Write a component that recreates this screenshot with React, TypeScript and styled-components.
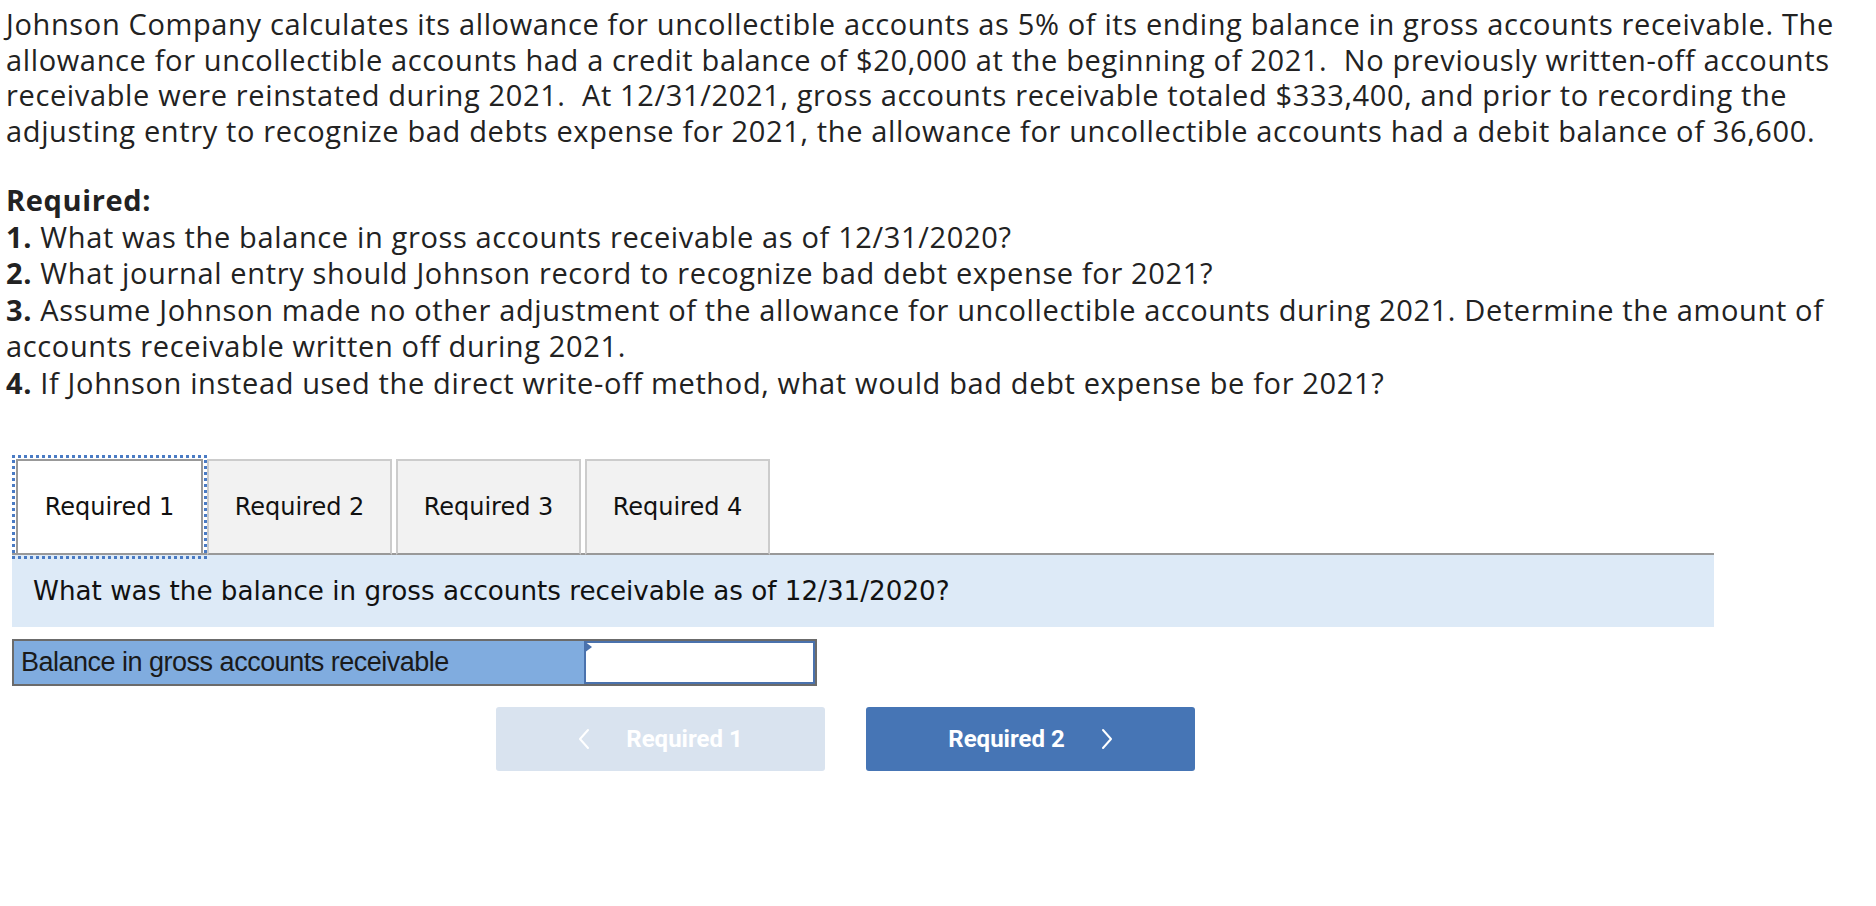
import styled, { createGlobalStyle } from "styled-components";

const GlobalStyle = createGlobalStyle`
  html, body {
    margin: 0;
    padding: 0;
    background: #ffffff;
  }
`;

const Page = styled.div`
  width: 1876px;
  min-height: 906px;
  box-sizing: border-box;
`;

const Prose = styled.div`
  font-family: "Open Sans", Lato, sans-serif;
  font-size: 29px;
  letter-spacing: 0.64px;
  color: #222222;
  padding-left: 6px;
  white-space: nowrap;

  b {
    font-weight: 700;
  }
`;

const Intro = styled.p`
  margin: 0;
  padding-top: 6px;
  line-height: 35.5px;
`;

const Required = styled.div`
  margin-top: 34px;
  line-height: 36.5px;
`;

const Work = styled.div`
  margin: 0 0 0 12px;
  width: 1702px;
  padding-top: 58px;
`;

const TabStrip = styled.div`
  display: flex;
  align-items: flex-end;
  gap: 4px;
  border-bottom: 2px solid #999999;
  padding-left: 4px;
`;

const Tab = styled.button<{ $active?: boolean }>`
  box-sizing: border-box;
  width: ${(p) => (p.$active ? "187px" : "185px")};
  height: 96px;
  margin-bottom: -2px;
  border: 2px solid ${(p) => (p.$active ? "#999999" : "#cccccc")};
  border-bottom: 2px solid #999999;
  background: ${(p) => (p.$active ? "#ffffff" : "#f2f2f2")};
  font-family: "DejaVu Sans", Verdana, sans-serif;
  font-size: 24px;
  color: #111111;
  padding: 0;
  cursor: pointer;
  outline: ${(p) => (p.$active ? "3px dotted #4a7bc4" : "none")};
  outline-offset: 1px;
`;

const Question = styled.div`
  background: #ddeaf7;
  height: 72px;
  display: flex;
  align-items: center;
  padding-left: 21px;
  font-family: "DejaVu Sans", Verdana, sans-serif;
  font-size: 26.2px;
  color: #111111;
`;

const AnswerRow = styled.div`
  display: flex;
  margin-top: 12px;
  height: 47px;
`;

const Label = styled.div`
  box-sizing: border-box;
  width: 572px;
  background: #80acdf;
  border: 2px solid #6b6b6b;
  border-right: none;
  display: flex;
  align-items: center;
  padding-left: 7px;
  font-family: "Liberation Sans", Arial, sans-serif;
  font-size: 27px;
  letter-spacing: -0.5px;
  color: #1a1a1a;
`;

const InputCell = styled.div`
  position: relative;
  box-sizing: border-box;
  width: 233px;
  border: 2px solid #6b6b6b;
  border-left: none;
  background: #ffffff;
`;

const Input = styled.input`
  box-sizing: border-box;
  width: 100%;
  height: 100%;
  border: 2px solid #4a72ad;
  outline: none;
  font-size: 20px;
  padding: 0 8px;
`;

const Marker = styled.span`
  position: absolute;
  left: 0;
  top: 0;
  width: 0;
  height: 0;
  border-top: 6px solid transparent;
  border-bottom: 6px solid transparent;
  border-left: 8px solid #4a72ad;
`;

const Nav = styled.div`
  display: flex;
  gap: 41px;
  margin-top: 21px;
  padding-left: 484px;
`;

const NavButton = styled.button<{ $disabled?: boolean }>`
  box-sizing: border-box;
  width: 329px;
  height: 64px;
  border: none;
  border-radius: 3px;
  background: ${(p) => (p.$disabled ? "#d9e3ef" : "#4675b5")};
  color: #ffffff;
  font-family: Roboto, "Liberation Sans", sans-serif;
  font-weight: 700;
  font-size: 24px;
  display: flex;
  align-items: center;
  justify-content: center;
  gap: 36px;
  cursor: ${(p) => (p.$disabled ? "default" : "pointer")};
`;

const Chevron = ({ dir }: { dir: "left" | "right" }) => (
  <svg width="12" height="22" viewBox="0 0 12 22" fill="none">
    <path
      d={dir === "left" ? "M10 2 L2 11 L10 20" : "M2 2 L10 11 L2 20"}
      stroke="#ffffff"
      strokeWidth="2"
      strokeLinecap="round"
      strokeLinejoin="round"
    />
  </svg>
);

export default function App() {
  return (
    <Page>
      <GlobalStyle />
      <Prose>
        <Intro>
          Johnson Company calculates its allowance for uncollectible accounts as 5% of its ending balance in gross accounts receivable. The
          <br />
          allowance for uncollectible accounts had a credit balance of $20,000 at the beginning of 2021.&nbsp; No previously written-off accounts
          <br />
          receivable were reinstated during 2021.&nbsp; At 12/31/2021, gross accounts receivable totaled $333,400, and prior to recording the
          <br />
          adjusting entry to recognize bad debts expense for 2021, the allowance for uncollectible accounts had a debit balance of 36,600.
        </Intro>
        <Required>
          <b>Required:</b>
          <br />
          <b>1.</b> What was the balance in gross accounts receivable as of 12/31/2020?
          <br />
          <b>2.</b> What journal entry should Johnson record to recognize bad debt expense for 2021?
          <br />
          <b>3.</b> Assume Johnson made no other adjustment of the allowance for uncollectible accounts during 2021. Determine the amount of
          <br />
          accounts receivable written off during 2021.
          <br />
          <b>4.</b> If Johnson instead used the direct write-off method, what would bad debt expense be for 2021?
        </Required>
      </Prose>
      <Work>
        <TabStrip>
          <Tab $active>Required 1</Tab>
          <Tab>Required 2</Tab>
          <Tab>Required 3</Tab>
          <Tab>Required 4</Tab>
        </TabStrip>
        <Question>What was the balance in gross accounts receivable as of 12/31/2020?</Question>
        <AnswerRow>
          <Label>Balance in gross accounts receivable</Label>
          <InputCell>
            <Input aria-label="Balance in gross accounts receivable" />
            <Marker />
          </InputCell>
        </AnswerRow>
        <Nav>
          <NavButton $disabled>
            <Chevron dir="left" />
            Required 1
          </NavButton>
          <NavButton>
            Required 2
            <Chevron dir="right" />
          </NavButton>
        </Nav>
      </Work>
    </Page>
  );
}
